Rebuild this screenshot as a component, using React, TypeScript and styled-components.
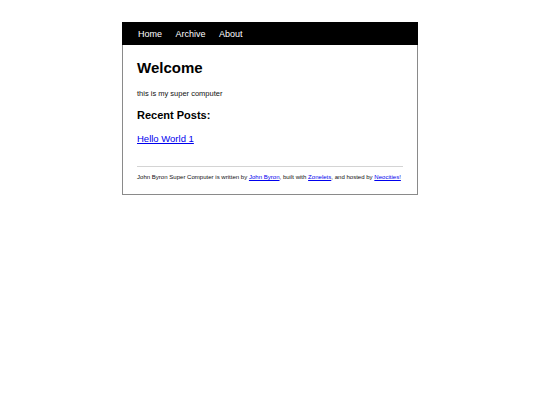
import React from 'react';
import styled, { createGlobalStyle } from 'styled-components';

const GlobalStyle = createGlobalStyle`
  html, body {
    margin: 0;
    padding: 0;
    background: #ffffff;
    font-family: "Liberation Sans", Arial, sans-serif;
  }
`;

const Page = styled.div`
  width: 296px;
  margin: 22px auto 0;
  border: 1px solid #8a8a8a;
  border-top: none;
  box-sizing: border-box;
`;

const Nav = styled.nav`
  display: flex;
  gap: 13.5px;
  align-items: center;
  height: 23px;
  margin: 0 -1px;
  padding: 0 16px;
  background: #000;
`;

const NavLink = styled.a`
  color: #fff;
  font-size: 9px;
  text-decoration: none;
`;

const Main = styled.main`
  padding: 14px 14px 13px;
`;

const Title = styled.h1`
  margin: 0;
  font-size: 15px;
  line-height: 18px;
  font-weight: bold;
  color: #000;
`;

const Paragraph = styled.p`
  margin: 12px 0 0;
  font-size: 7.5px;
  line-height: 10px;
  color: #111;
`;

const Subtitle = styled.h2`
  margin: 9px 0 0;
  font-size: 11px;
  line-height: 14px;
  font-weight: bold;
  color: #000;
`;

const PostLink = styled.a<{ $small?: boolean }>`
  color: #0000ee;
  text-decoration: underline;
  font-size: ${(p) => (p.$small ? '6.05px' : '9.5px')};
`;

const PostItem = styled.div`
  margin-top: 9px;
  line-height: 12px;
`;

const Rule = styled.hr`
  margin: 21px 0 0;
  border: none;
  border-top: 1px solid #d4d4d4;
`;

const Footer = styled.footer`
  margin-top: 6px;
  font-size: 6.05px;
  line-height: 8px;
  color: #111;
`;

const App: React.FC = () => {
  return (
    <>
      <GlobalStyle />
      <Page>
        <Nav>
          <NavLink href="#">Home</NavLink>
          <NavLink href="#">Archive</NavLink>
          <NavLink href="#">About</NavLink>
        </Nav>
        <Main>
          <Title>Welcome</Title>
          <Paragraph>this is my super computer</Paragraph>
          <Subtitle>Recent Posts:</Subtitle>
          <PostItem>
            <PostLink href="#">Hello World 1</PostLink>
          </PostItem>
          <Rule />
          <Footer>
            John Byron Super Computer is written by <PostLink $small href="#">John Byron</PostLink>, built with{' '}
            <PostLink $small href="#">Zonelets</PostLink>, and hosted by <PostLink $small href="#">Neocities!</PostLink>
          </Footer>
        </Main>
      </Page>
    </>
  );
};

export default App;
